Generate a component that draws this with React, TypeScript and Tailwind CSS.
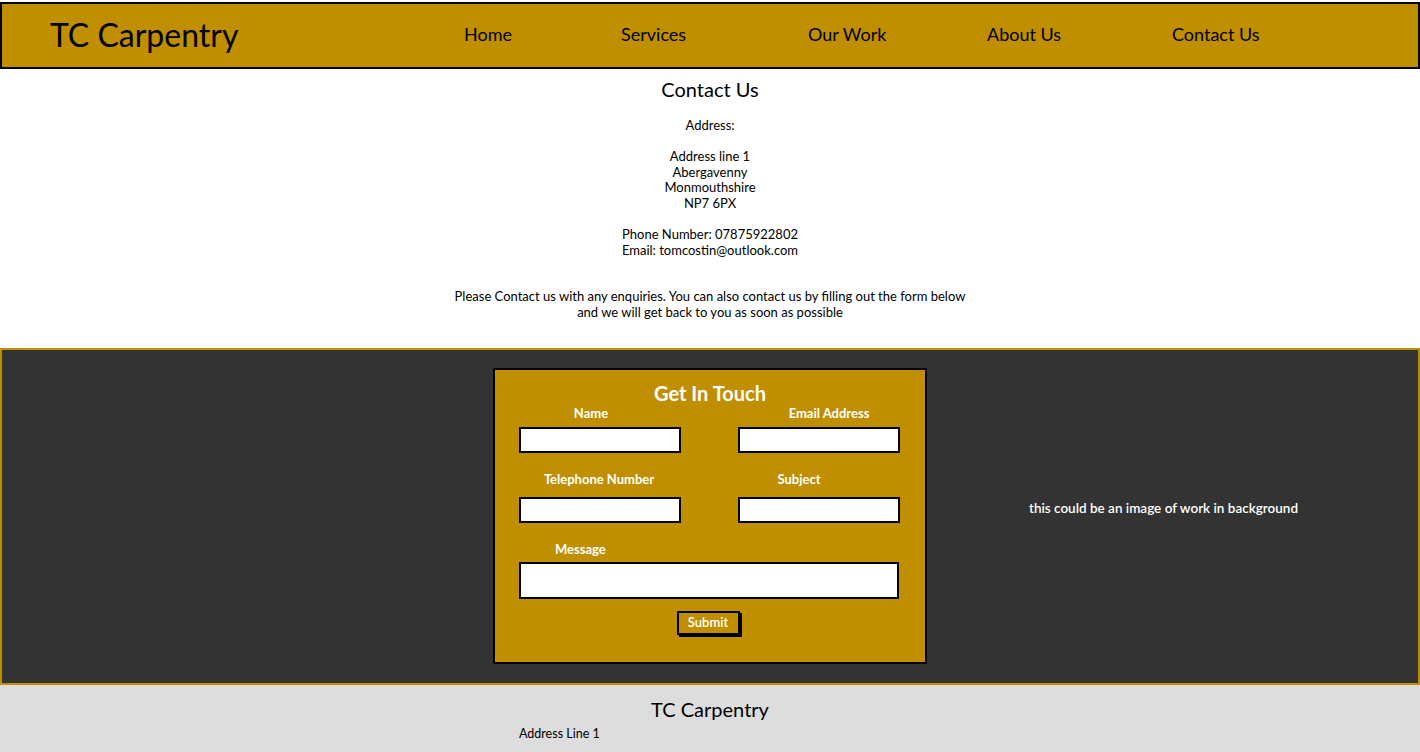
export default function App() {
  const font = { fontFamily: "Lato, 'Open Sans', sans-serif" };
  return (
    <div className="w-[1420px] h-[752px] overflow-hidden bg-white text-black" style={font}>
      <header className="mt-[2px] h-[67px] bg-[#bf8f00] border-2 border-black flex items-center">
        <div className="w-[400px] pl-[48px] text-[32px] leading-none pb-[2px]">TC Carpentry</div>
        <nav className="flex-1 relative h-full text-[18px]">
          <span className="absolute top-[17px] left-[62px]">Home</span>
          <span className="absolute top-[17px] left-[219px]">Services</span>
          <span className="absolute top-[17px] left-[406px]">Our Work</span>
          <span className="absolute top-[17px] left-[585px]">About Us</span>
          <span className="absolute top-[17px] left-[770px]">Contact Us</span>
        </nav>
      </header>
      <section className="flex flex-col items-center text-center pt-[8px] h-[279px]">
        <h1 className="text-[20px] leading-[24px]">Contact Us</h1>
        <div className="mt-[17px] text-[13px] leading-[15.6px] flex flex-col items-center">
          <p>Address:</p>
          <p className="mt-[15.6px]">Address line 1<br />Abergavenny<br />Monmouthshire<br />NP7 6PX</p>
          <p className="mt-[15.6px]">Phone Number: 07875922802<br />Email: tomcostin@outlook.com</p>
          <p className="mt-[31px] w-[525px]">Please Contact us with any enquiries. You can also contact us by filling out the form below and we will get back to you as soon as possible</p>
        </div>
      </section>
      <section className="h-[337px] bg-[#333333] border-2 border-[#bf8f00] flex pt-[18px]">
        <div className="w-[491px]" />
        <div className="w-[434px] h-[296px] bg-[#bf8f00] border-2 border-black text-white font-bold relative">
          <h2 className="text-center text-[20px] leading-[24px] mt-[11px]">Get In Touch</h2>
          <div className="grid grid-cols-2 gap-x-[56px] px-[24px] text-[13px]">
            <div>
              <div className="text-center w-[162px] ml-[-9px] leading-[15px] mt-[1px]">Name</div>
              <div className="mt-[6px] h-[26px] w-[162px] bg-white border-2 border-black" />
            </div>
            <div>
              <div className="text-center w-[162px] ml-[10px] leading-[15px] mt-[1px]">Email Address</div>
              <div className="mt-[6px] h-[26px] w-[162px] bg-white border-2 border-black" />
            </div>
            <div>
              <div className="text-center w-[162px] ml-[-1px] leading-[15px] mt-[19px]">Telephone Number</div>
              <div className="mt-[10px] h-[26px] w-[162px] bg-white border-2 border-black" />
            </div>
            <div>
              <div className="text-center w-[162px] ml-[-20px] leading-[15px] mt-[19px]">Subject</div>
              <div className="mt-[10px] h-[26px] w-[162px] bg-white border-2 border-black" />
            </div>
          </div>
          <div className="px-[24px] text-[13px]">
            <div className="ml-[36px] mt-[19px] leading-[15px]">Message</div>
            <div className="mt-[5px] h-[37px] w-[380px] bg-white border-2 border-black" />
          </div>
          <div className="flex justify-center mt-[12px] pr-[4px]">
            <div className="h-[24px] w-[63px] border-2 border-black shadow-[2px_2px_0_#000] bg-[#bf8f00] text-[13px] flex items-center justify-center font-semibold">Submit</div>
          </div>
        </div>
        <div className="flex-1 flex items-center justify-center pb-[34px] pr-[18px] text-white text-[13.5px] font-semibold">
          this could be an image of work in background
        </div>
      </section>
      <footer className="bg-[#dddddd] h-[70px] pt-[12px]">
        <h2 className="text-center text-[20px] leading-[24px]">TC Carpentry</h2>
        <div className="ml-[519px] mt-[6px] text-[12.5px] leading-[14px]">Address Line 1</div>
      </footer>
    </div>
  );
}
